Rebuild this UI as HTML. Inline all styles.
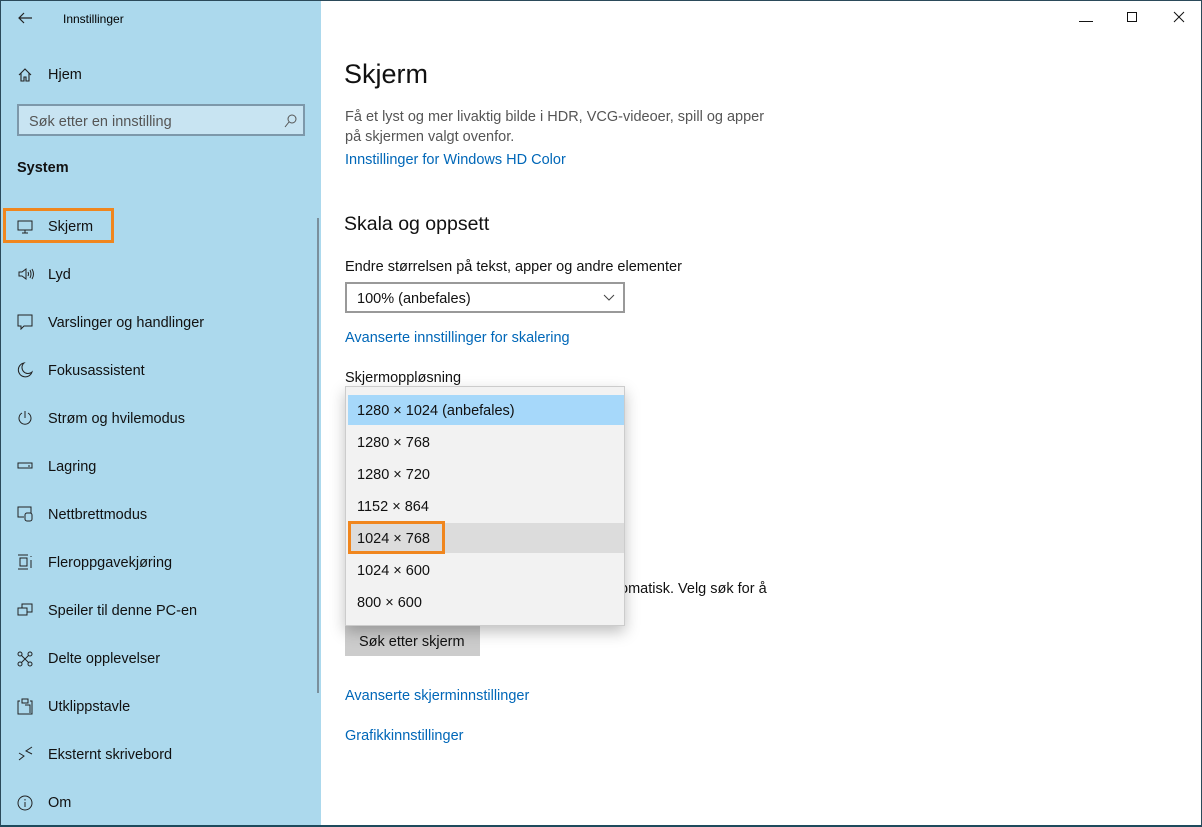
<!DOCTYPE html>
<html><head><meta charset="utf-8"><style>
*{margin:0;padding:0;box-sizing:border-box}
body{width:1202px;height:827px;overflow:hidden;background:#fff;font-family:"Liberation Sans",sans-serif;color:#000;position:relative}
.frame{position:absolute;left:0;top:0;width:1202px;height:827px;border:1px solid #2b4a5a;border-bottom:2px solid #1e4a5c;pointer-events:none;z-index:10}
.side{position:absolute;left:0;top:0;width:321px;height:827px;background:#acd9ed}
.t{position:absolute;white-space:nowrap;margin-top:2px}
.nav{position:absolute;left:48px;font-size:14.5px;color:#111}
.ic{position:absolute;left:17px;margin-top:1px}
.link{color:#0067b8;font-size:14.5px}
.dd{position:absolute;left:345px;top:386px;width:280px;height:240px;background:#f2f2f2;border:1px solid #ccc;box-shadow:0 6px 14px rgba(0,0,0,.25)}
.opt{position:absolute;left:11px;font-size:14.5px;color:#111}
</style></head><body>
<div class="side">
<svg class="ic" style="left:17px;top:10px" width="16" height="14"><path d="M15 7H2M7 2 2 7l5 5" stroke="#222" fill="none" stroke-width="1.2"/></svg>
<div class="t" style="left:63px;top:10px;font-size:12px">Innstillinger</div>
<svg class="ic" style="top:66px" width="16" height="16"><path d="M2 8 8 2l6 6M4 6v8h3v-4h2v4h3V6" stroke="#222" fill="none" stroke-width="1.1"/></svg>
<div class="t nav" style="top:65px">Hjem</div>
<div style="position:absolute;left:17px;top:104px;width:288px;height:32px;border:2px solid #7d98aa;background:#c8e4f2"></div>
<div class="t" style="left:29px;top:112px;font-size:14.5px;color:#555">Søk etter en innstilling</div>
<svg style="position:absolute;left:283px;top:113px" width="14" height="16"><circle cx="9" cy="6" r="4" stroke="#555" fill="none"/><path d="M6 9 2 14" stroke="#555"/></svg>
<div class="t" style="left:17px;top:158px;font-size:14.5px;font-weight:bold;color:#111">System</div>
<div style="position:absolute;left:3px;top:208px;width:111px;height:35px;border:3px solid #f0861e"></div>
<div style="position:absolute;left:317px;top:218px;width:2px;height:475px;background:#7a8f9c"></div>

<svg class="ic" style="top:219px" width="16" height="14"><rect x="1" y="1" width="14" height="9" stroke="#222" fill="none"/><path d="M8 10v3M5 13h6" stroke="#222"/></svg>
<div class="t nav" style="top:217px">Skjerm</div>
<svg class="ic" style="top:266px" width="18" height="14"><path d="M2 5h3l4-3v10l-4-3H2z" stroke="#222" fill="none"/><path d="M11 5q1 2 0 4M13 3q2 4 0 8M15 2q3 5 0 10" stroke="#222" fill="none"/></svg>
<div class="t nav" style="top:265px">Lyd</div>
<svg class="ic" style="top:313px" width="16" height="16"><path d="M1 1h14v11H7l-3 3v-3H1z" stroke="#222" fill="none"/></svg>
<div class="t nav" style="top:313px">Varslinger og handlinger</div>
<svg class="ic" style="top:361px" width="16" height="16"><path d="M7 1A7 7 0 1 0 15 10 6 6 0 0 1 7 1z" stroke="#222" fill="none"/></svg>
<div class="t nav" style="top:361px">Fokusassistent</div>
<svg class="ic" style="top:409px" width="16" height="16"><path d="M5 3a6 6 0 1 0 6 0M8 1v7" stroke="#222" fill="none"/></svg>
<div class="t nav" style="top:409px">Strøm og hvilemodus</div>
<svg class="ic" style="top:460px" width="16" height="10"><rect x="1" y="2" width="14" height="5" stroke="#222" fill="none"/><path d="M11 5h2" stroke="#222"/></svg>
<div class="t nav" style="top:457px">Lagring</div>
<svg class="ic" style="top:505px" width="16" height="16"><path d="M7 11H1V1h13v6" stroke="#222" fill="none"/><rect x="8" y="7" width="7" height="8" rx="2" stroke="#222" fill="none"/></svg>
<div class="t nav" style="top:505px">Nettbrettmodus</div>
<svg class="ic" style="top:553px" width="16" height="16"><path d="M1 1h10M1 15h10M3 4h7v8H3zM14 2v1M14 6v8" stroke="#222" fill="none"/></svg>
<div class="t nav" style="top:553px">Fleroppgavekjøring</div>
<svg class="ic" style="top:602px" width="16" height="14"><rect x="5" y="1" width="10" height="8" stroke="#222" fill="none"/><rect x="1" y="5" width="9" height="7" stroke="#222" fill="#acd9ed"/></svg>
<div class="t nav" style="top:601px">Speiler til denne PC-en</div>
<svg class="ic" style="top:650px" width="16" height="16"><path d="M3 3l10 10M13 3 3 13" stroke="#222"/><circle cx="3" cy="3" r="2" fill="#acd9ed" stroke="#222"/><circle cx="13" cy="3" r="2" fill="#acd9ed" stroke="#222"/><circle cx="3" cy="13" r="2" fill="#acd9ed" stroke="#222"/><circle cx="13" cy="13" r="2" fill="#acd9ed" stroke="#222"/></svg>
<div class="t nav" style="top:649px">Delte opplevelser</div>
<svg class="ic" style="top:697px" width="16" height="17"><path d="M3 3H1v13h14V3h-2M5 1h6v4H5zM8 7h5v8" stroke="#222" fill="none"/></svg>
<div class="t nav" style="top:697px">Utklippstavle</div>
<svg class="ic" style="top:745px" width="16" height="16"><path d="M2 7l5 3-5 4M15 1 9 5l6 3" stroke="#222" fill="none"/></svg>
<div class="t nav" style="top:745px">Eksternt skrivebord</div>
<svg class="ic" style="top:794px" width="16" height="16"><circle cx="8" cy="8" r="7" stroke="#222" fill="none"/><path d="M8 7v5M8 4v1.5" stroke="#222"/></svg>
<div class="t nav" style="top:793px">Om</div>
</div>

<div class="t" style="left:1079px;top:10px;font-size:14px">—</div>
<div style="position:absolute;left:1127px;top:12px;width:10px;height:10px;border:1px solid #111"></div>
<svg style="position:absolute;left:1173px;top:11px" width="12" height="12"><path d="M1 1l10 10M11 1 1 11" stroke="#111"/></svg>

<div class="t" style="left:344px;top:57px;font-size:27px;color:#111">Skjerm</div>
<div class="t" style="left:345px;top:105px;font-size:14.5px;color:#555;line-height:20px">Få et lyst og mer livaktig bilde i HDR, VCG-videoer, spill og apper<br>på skjermen valgt ovenfor.</div>
<div class="t link" style="left:345px;top:150px">Innstillinger for Windows HD Color</div>
<div class="t" style="left:344px;top:211px;font-size:19.5px;color:#111">Skala og oppsett</div>
<div class="t" style="left:345px;top:257px;font-size:14.5px;color:#111">Endre størrelsen på tekst, apper og andre elementer</div>
<div style="position:absolute;left:345px;top:282px;width:280px;height:31px;border:2px solid #999"></div>
<div class="t" style="left:357px;top:289px;font-size:14.5px;color:#111">100% (anbefales)</div>
<svg style="position:absolute;left:603px;top:294px" width="12" height="8"><path d="M1 1l5 5 5-5" stroke="#444" fill="none"/></svg>
<div class="t link" style="left:345px;top:328px">Avanserte innstillinger for skalering</div>
<div class="t" style="left:345px;top:368px;font-size:14.5px;color:#111">Skjermoppløsning</div>
<div class="t" style="left:620px;top:579px;font-size:14.5px;color:#111">omatisk. Velg søk for å</div>
<div style="position:absolute;left:345px;top:625px;width:135px;height:31px;background:#ccc"></div>
<div class="t" style="left:359px;top:632px;font-size:14.5px;color:#111">Søk etter skjerm</div>
<div class="t link" style="left:345px;top:686px">Avanserte skjerminnstillinger</div>
<div class="t link" style="left:345px;top:726px">Grafikkinnstillinger</div>

<div class="dd">
<div style="position:absolute;left:2px;top:8px;width:276px;height:30px;background:#a6d8fa"></div>
<div style="position:absolute;left:2px;top:136px;width:276px;height:30px;background:#dcdcdc"></div>
<div style="position:absolute;left:2px;top:134px;width:97px;height:33px;border:3px solid #f0861e"></div>
<div class="t opt" style="top:14px">1280 × 1024 (anbefales)</div>
<div class="t opt" style="top:46px">1280 × 768</div>
<div class="t opt" style="top:78px">1280 × 720</div>
<div class="t opt" style="top:110px">1152 × 864</div>
<div class="t opt" style="top:142px">1024 × 768</div>
<div class="t opt" style="top:174px">1024 × 600</div>
<div class="t opt" style="top:206px">800 × 600</div>
</div>
<div class="frame"></div>
</body></html>
